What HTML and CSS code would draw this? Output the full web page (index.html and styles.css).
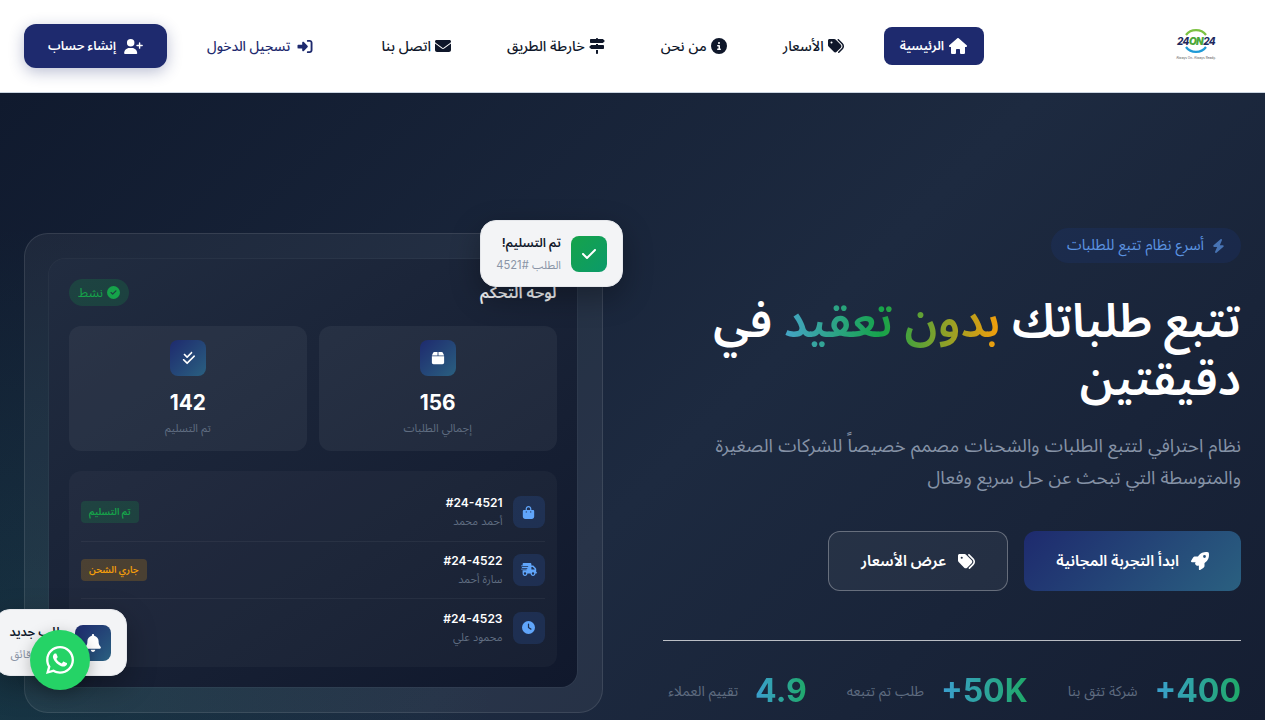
FILE: index.html
```html
<!DOCTYPE html>
<html lang="ar" dir="rtl">
<head>
    <meta charset="UTF-8">
    <meta name="viewport" content="width=device-width, initial-scale=1.0">
    <title>24ON24 - تتبع الطلبات</title>
    <link rel="stylesheet" href="styles.css">
</head>
<body>
    <svg class="sprite" xmlns="http://www.w3.org/2000/svg">
        <symbol id="i-home" viewBox="0 0 576 512"><path d="M575.8 255.5c0 18-15 32.1-32 32.1h-32l.7 160.2c0 2.7-.2 5.4-.5 8.1V472c0 22.1-17.9 40-40 40H456c-1.1 0-2.2 0-3.3-.1c-1.4 .1-2.8 .1-4.2 .1H416 392c-22.1 0-40-17.9-40-40V448 384c0-17.7-14.3-32-32-32H256c-17.7 0-32 14.3-32 32v64 24c0 22.1-17.9 40-40 40H160 128.1c-1.5 0-3-.1-4.5-.2c-1.2 .1-2.4 .2-3.6 .2H104c-22.1 0-40-17.9-40-40V360c0-.9 0-1.9 .1-2.8V287.6H32c-18 0-32-14-32-32.1c0-9 3-17 10-24L266.4 8c7-7 15-8 22-8s15 2 21 7L564.8 231.5c8 7 12 15 11 24z"/></symbol>
        <symbol id="i-tags" viewBox="0 0 512 512"><path d="M345 39.1L472.8 168.4c52.4 53 52.4 138.2 0 191.2L360.8 472.9c-9.3 9.4-24.5 9.5-33.9 .2s-9.5-24.5-.2-33.9L438.6 325.9c33.9-34.3 33.9-89.4 0-123.7L310.9 72.9c-9.3-9.4-9.2-24.6 .2-33.9s24.6-9.2 33.9 .2zM0 229.5V80C0 53.5 21.5 32 48 32H197.5c17 0 33.3 6.7 45.3 18.7l168 168c25 25 25 65.5 0 90.5L277.3 442.7c-25 25-65.5 25-90.5 0l-168-168C6.7 262.7 0 246.5 0 229.5zM144 144a32 32 0 1 0 -64 0 32 32 0 1 0 64 0z"/></symbol>
        <symbol id="i-info" viewBox="0 0 512 512"><path d="M256 512A256 256 0 1 0 256 0a256 256 0 1 0 0 512zM216 336h24V272H216c-13.3 0-24-10.7-24-24s10.7-24 24-24h48c13.3 0 24 10.7 24 24v88h8c13.3 0 24 10.7 24 24s-10.7 24-24 24H216c-13.3 0-24-10.7-24-24s10.7-24 24-24zm40-208a32 32 0 1 1 0 64 32 32 0 1 1 0-64z"/></symbol>
        <symbol id="i-signs" viewBox="0 0 512 512"><path d="M224 32H64C46.3 32 32 46.3 32 64v64c0 17.7 14.3 32 32 32H441.4c4.2 0 8.3-1.7 11.3-4.7l48-48c6.2-6.2 6.2-16.4 0-22.6l-48-48c-3-3-7.1-4.7-11.3-4.7H288c0-17.7-14.3-32-32-32s-32 14.3-32 32zM480 256c0-17.7-14.3-32-32-32H288V192H224v32H70.6c-4.2 0-8.3 1.7-11.3 4.7l-48 48c-6.2 6.2-6.2 16.4 0 22.6l48 48c3 3 7.1 4.7 11.3 4.7H448c17.7 0 32-14.3 32-32V256zM288 480V384H224v96c0 17.7 14.3 32 32 32s32-14.3 32-32z"/></symbol>
        <symbol id="i-envelope" viewBox="0 0 512 512"><path d="M48 64C21.5 64 0 85.5 0 112c0 15.1 7.1 29.3 19.2 38.4L236.8 313.6c11.4 8.5 27 8.5 38.4 0L492.8 150.4c12.1-9.1 19.2-23.3 19.2-38.4c0-26.5-21.5-48-48-48H48zM0 176V384c0 35.3 28.7 64 64 64H448c35.3 0 64-28.7 64-64V176L294.4 339.2c-22.8 17.1-54 17.1-76.8 0L0 176z"/></symbol>
        <symbol id="i-signin" viewBox="0 0 512 512"><path d="M217.9 105.9L340.7 228.7c7.2 7.2 11.3 17.1 11.3 27.3s-4.1 20.1-11.3 27.3L217.9 406.1c-6.4 6.4-15 9.9-24 9.9c-18.7 0-33.9-15.2-33.9-33.9l0-62.1L32 320c-17.7 0-32-14.3-32-32l0-64c0-17.7 14.3-32 32-32l128 0 0-62.1c0-18.7 15.2-33.9 33.9-33.9c9 0 17.6 3.6 24 9.9zM352 416l64 0c17.7 0 32-14.3 32-32l0-256c0-17.7-14.3-32-32-32l-64 0c-17.7 0-32-14.3-32-32s14.3-32 32-32l64 0c53 0 96 43 96 96l0 256c0 53-43 96-96 96l-64 0c-17.7 0-32-14.3-32-32s14.3-32 32-32z"/></symbol>
        <symbol id="i-userplus" viewBox="0 0 640 512"><path d="M96 128a128 128 0 1 1 256 0A128 128 0 1 1 96 128zM0 482.3C0 383.8 79.8 304 178.3 304h91.4C368.2 304 448 383.8 448 482.3c0 16.4-13.3 29.7-29.7 29.7H29.7C13.3 512 0 498.7 0 482.3zM504 312V248H440c-13.3 0-24-10.7-24-24s10.7-24 24-24h64V136c0-13.3 10.7-24 24-24s24 10.7 24 24v64h64c13.3 0 24 10.7 24 24s-10.7 24-24 24H552v64c0 13.3-10.7 24-24 24s-24-10.7-24-24z"/></symbol>
        <symbol id="i-bolt" viewBox="0 0 448 512"><path d="M349.4 44.6c5.9-13.7 1.5-29.7-10.6-38.5s-28.6-8-39.9 1.8l-256 224c-10 8.8-13.6 22.9-8.9 35.3S50.7 288 64 288H175.5L98.6 467.4c-5.9 13.7-1.5 29.7 10.6 38.5s28.6 8 39.9-1.8l256-224c10-8.8 13.6-22.9 8.9-35.3s-16.6-20.7-30-20.7H272.5L349.4 44.6z"/></symbol>
        <symbol id="i-rocket" viewBox="0 0 512 512"><path d="M156.6 384.9L125.7 354c-8.5-8.5-11.5-20.8-7.7-32.2c3-8.9 7-20.5 11.8-33.8L24 288c-8.6 0-16.6-4.6-20.9-12.1s-4.2-16.7 .2-24.1l52.5-88.5c13-21.9 36.5-35.3 62-35.3l82.3 0c2.4-4 4.8-7.7 7.2-11.3C289.1-4.1 411.1-8.1 483.9 5.3c11.6 2.1 20.6 11.2 22.8 22.8c13.4 72.9 9.3 194.8-111.4 276.7c-3.5 2.4-7.3 4.8-11.3 7.2v82.3c0 25.5-13.4 49-35.3 61.9l-88.5 52.5c-7.4 4.4-16.6 4.5-24.1 .2s-12.1-12.2-12.1-20.9V380.8c-14.1 4.9-26.4 8.9-35.7 11.9c-11.2 3.6-23.4 .5-31.8-7.8zM384 168a40 40 0 1 0 0-80 40 40 0 1 0 0 80z"/></symbol>
        <symbol id="i-box" viewBox="0 0 448 512"><path d="M50.7 58.5L0 160H208V32H93.7C75.5 32 58.9 42.3 50.7 58.5zM240 160H448L397.3 58.5C389.1 42.3 372.5 32 354.3 32H240V160zm208 32H0V416c0 35.3 28.7 64 64 64H384c35.3 0 64-28.7 64-64V192z"/></symbol>
        <symbol id="i-checkdouble" viewBox="0 0 448 512"><path d="M374.6 86.6c12.5-12.5 12.5-32.8 0-45.3s-32.8-12.5-45.3 0L192 178.7 118.6 105.4c-12.5-12.5-32.8-12.5-45.3 0s-12.5 32.8 0 45.3l96 96c12.5 12.5 32.8 12.5 45.3 0l160-160zm96 128c12.5-12.5 12.5-32.8 0-45.3s-32.8-12.5-45.3 0L192 402.7 86.6 297.4c-12.5-12.5-32.8-12.5-45.3 0s-12.5 32.8 0 45.3l128 128c12.5 12.5 32.8 12.5 45.3 0l256-256z"/></symbol>
        <symbol id="i-checkcircle" viewBox="0 0 512 512"><path d="M256 512A256 256 0 1 0 256 0a256 256 0 1 0 0 512zM369 209L241 337c-9.4 9.4-24.6 9.4-33.9 0l-64-64c-9.4-9.4-9.4-24.6 0-33.9s24.6-9.4 33.9 0l47 47L335 175c9.4-9.4 24.6-9.4 33.9 0s9.4 24.6 0 33.9z"/></symbol>
        <symbol id="i-check" viewBox="0 0 448 512"><path d="M438.6 105.4c12.5 12.5 12.5 32.8 0 45.3l-256 256c-12.5 12.5-32.8 12.5-45.3 0l-128-128c-12.5-12.5-12.5-32.8 0-45.3s32.8-12.5 45.3 0L160 338.7 393.4 105.4c12.5-12.5 32.8-12.5 45.3 0z"/></symbol>
        <symbol id="i-bag" viewBox="0 0 448 512"><path d="M160 112c0-35.3 28.7-64 64-64s64 28.7 64 64v48H160V112zm-48 48H48c-26.5 0-48 21.5-48 48V416c0 53 43 96 96 96H352c53 0 96-43 96-96V208c0-26.5-21.5-48-48-48H336V112C336 50.1 285.9 0 224 0S112 50.1 112 112v48zm24 48a24 24 0 1 1 0 48 24 24 0 1 1 0-48zm152 24a24 24 0 1 1 48 0 24 24 0 1 1 -48 0z"/></symbol>
        <symbol id="i-truck" viewBox="0 0 640 512"><path d="M112 0C85.5 0 64 21.5 64 48V96H16c-8.8 0-16 7.2-16 16s7.2 16 16 16H64 272c8.8 0 16 7.2 16 16s-7.2 16-16 16H64 48c-8.8 0-16 7.2-16 16s7.2 16 16 16H64 240c8.8 0 16 7.2 16 16s-7.2 16-16 16H64 16c-8.8 0-16 7.2-16 16s7.2 16 16 16H64 208c8.8 0 16 7.2 16 16s-7.2 16-16 16H64V416c0 53 43 96 96 96s96-43 96-96H384c0 53 43 96 96 96s96-43 96-96h32c17.7 0 32-14.3 32-32s-14.3-32-32-32V288 256 237.3c0-17-6.7-33.3-18.7-45.3L512 114.7c-12-12-28.3-18.7-45.3-18.7H416V48c0-26.5-21.5-48-48-48H112zM544 237.3V256H416V160h50.7L544 237.3zM160 368a48 48 0 1 1 0 96 48 48 0 1 1 0-96zm272 48a48 48 0 1 1 96 0 48 48 0 1 1 -96 0z"/></symbol>
        <symbol id="i-clock" viewBox="0 0 512 512"><path d="M256 0a256 256 0 1 1 0 512A256 256 0 1 1 256 0zM232 120V256c0 8 4 15.5 10.7 20l96 64c11 7.4 25.9 4.4 33.3-6.7s4.4-25.9-6.7-33.3L280 243.2V120c0-13.3-10.7-24-24-24s-24 10.7-24 24z"/></symbol>
        <symbol id="i-bell" viewBox="0 0 448 512"><path d="M224 0c-17.7 0-32 14.3-32 32V51.2C119 66 64 130.6 64 208v18.8c0 47-17.3 92.4-48.5 127.6l-7.4 8.3c-8.4 9.4-10.4 22.9-5.3 34.4S19.4 416 32 416H416c12.6 0 24-7.4 29.2-18.9s3.1-25-5.3-34.4l-7.4-8.3C401.3 319.2 384 273.9 384 226.8V208c0-77.4-55-142-128-156.8V32c0-17.7-14.3-32-32-32zm45.3 493.3c12-12 18.7-28.3 18.7-45.3H224 160c0 17 6.7 33.3 18.7 45.3s28.3 18.7 45.3 18.7s33.3-6.7 45.3-18.7z"/></symbol>
        <symbol id="i-whatsapp" viewBox="0 0 448 512"><path d="M380.9 97.1C339 55.1 283.2 32 223.9 32c-122.4 0-222 99.6-222 222 0 39.1 10.2 77.3 29.6 111L0 480l117.7-30.9c32.4 17.7 68.9 27 106.1 27h.1c122.3 0 224.1-99.6 224.1-222 0-59.3-25.2-115-67.1-157zm-157 341.6c-33.2 0-65.7-8.9-94-25.7l-6.7-4-69.8 18.3L72 359.2l-4.4-7c-18.5-29.4-28.2-63.3-28.2-98.2 0-101.7 82.8-184.5 184.6-184.5 49.3 0 95.6 19.2 130.4 54.1 34.8 34.9 56.2 81.2 56.1 130.5 0 101.8-84.9 184.6-186.6 184.6zm101.2-138.2c-5.5-2.8-32.8-16.2-37.9-18-5.1-1.9-8.8-2.8-12.5 2.8-3.7 5.6-14.3 18-17.6 21.8-3.2 3.7-6.5 4.2-12 1.4-32.6-16.3-54-29.1-75.5-66-5.7-9.8 5.7-9.1 16.3-30.3 1.8-3.7.9-6.9-.5-9.7-1.4-2.8-12.5-30.1-17.1-41.2-4.5-10.8-9.1-9.3-12.5-9.5-3.2-.2-6.9-.2-10.6-.2-3.7 0-9.7 1.4-14.8 6.9-5.1 5.6-19.4 19-19.4 46.3 0 27.3 19.9 53.7 22.6 57.4 2.8 3.7 39.1 59.7 94.8 83.8 35.2 15.2 49 16.5 66.6 13.9 10.7-1.6 32.8-13.4 37.4-26.4 4.6-13 4.6-24.1 3.2-26.4-1.3-2.5-5-3.9-10.5-6.6z"/></symbol>
    </svg>

    <header class="navbar">
        <a href="#" class="logo">
            <span class="logo-mark">
                <svg class="logo-ring" viewBox="0 0 40 26">
                    <path d="M10 7 A12 11 0 0 1 30 7" fill="none" stroke="#7cc242" stroke-width="2.2"/>
                    <path d="M10 19 A12 11 0 0 0 30 19" fill="none" stroke="#1f9ad6" stroke-width="2.2"/>
                </svg>
                <span class="logo-text" dir="ltr">24<b>ON</b>24</span>
            </span>
            <span class="logo-tag" dir="ltr">Always On. Always Ready.</span>
        </a>
        <nav class="nav-links">
            <a href="#" class="nav-link active"><svg class="ico ico-home"><use href="#i-home"/></svg>الرئيسية</a>
            <a href="#" class="nav-link"><svg class="ico"><use href="#i-tags"/></svg>الأسعار</a>
            <a href="#" class="nav-link"><svg class="ico"><use href="#i-info"/></svg>من نحن</a>
            <a href="#" class="nav-link"><svg class="ico"><use href="#i-signs"/></svg>خارطة الطريق</a>
            <a href="#" class="nav-link"><svg class="ico"><use href="#i-envelope"/></svg>اتصل بنا</a>
        </nav>
        <div class="auth">
            <a href="#" class="login"><svg class="ico"><use href="#i-signin"/></svg>تسجيل الدخول</a>
            <a href="#" class="signup"><svg class="ico ico-user"><use href="#i-userplus"/></svg>إنشاء حساب</a>
        </div>
    </header>

    <main class="hero">
        <section class="hero-content">
            <div class="badge"><svg class="ico-bolt"><use href="#i-bolt"/></svg>أسرع نظام تتبع للطلبات</div>
            <h1>تتبع طلباتك <span class="highlight">بدون تعقيد</span> في دقيقتين</h1>
            <p class="lead">نظام احترافي لتتبع الطلبات والشحنات مصمم خصيصاً للشركات الصغيرة والمتوسطة التي تبحث عن حل سريع وفعال</p>
            <div class="hero-btns">
                <a href="#" class="btn btn-primary"><svg class="ico"><use href="#i-rocket"/></svg>ابدأ التجربة المجانية</a>
                <a href="#" class="btn btn-outline"><svg class="ico ico-tags"><use href="#i-tags"/></svg>عرض الأسعار</a>
            </div>
            <div class="hero-stats">
                <div class="stat"><span class="stat-num" dir="ltr">+400</span><span class="stat-label">شركة تثق بنا</span></div>
                <div class="stat"><span class="stat-num" dir="ltr">+50K</span><span class="stat-label">طلب تم تتبعه</span></div>
                <div class="stat"><span class="stat-num" dir="ltr">4.9</span><span class="stat-label">تقييم العملاء</span></div>
            </div>
        </section>

        <section class="preview">
            <div class="float-card float-top">
                <span class="float-icon float-green"><svg class="ico-check"><use href="#i-check"/></svg></span>
                <div>
                    <div class="float-title">تم التسليم!</div>
                    <div class="float-sub">الطلب #4521</div>
                </div>
            </div>
            <div class="dashboard">
                <div class="dash-head">
                    <h3>لوحة التحكم</h3>
                    <span class="pill"><svg class="ico-pill"><use href="#i-checkcircle"/></svg>نشط</span>
                </div>
                <div class="dash-stats">
                    <div class="dash-card">
                        <span class="dash-icon"><svg class="ico-box"><use href="#i-box"/></svg></span>
                        <div class="dash-num">156</div>
                        <div class="dash-label">إجمالي الطلبات</div>
                    </div>
                    <div class="dash-card">
                        <span class="dash-icon"><svg class="ico-box"><use href="#i-checkdouble"/></svg></span>
                        <div class="dash-num">142</div>
                        <div class="dash-label">تم التسليم</div>
                    </div>
                </div>
                <div class="orders">
                    <div class="order">
                        <span class="order-icon"><svg class="ico-order"><use href="#i-bag"/></svg></span>
                        <div class="order-info">
                            <div class="order-id">#24-4521</div>
                            <div class="order-name">أحمد محمد</div>
                        </div>
                        <span class="status status-done">تم التسليم</span>
                    </div>
                    <div class="order">
                        <span class="order-icon"><svg class="ico-order ico-truck"><use href="#i-truck"/></svg></span>
                        <div class="order-info">
                            <div class="order-id">#24-4522</div>
                            <div class="order-name">سارة أحمد</div>
                        </div>
                        <span class="status status-ship">جاري الشحن</span>
                    </div>
                    <div class="order">
                        <span class="order-icon"><svg class="ico-order"><use href="#i-clock"/></svg></span>
                        <div class="order-info">
                            <div class="order-id">#24-4523</div>
                            <div class="order-name">محمود علي</div>
                        </div>
                    </div>
                </div>
            </div>
            <div class="float-card float-bottom">
                <span class="float-icon float-blue"><svg class="ico-bell"><use href="#i-bell"/></svg></span>
                <div>
                    <div class="float-title">طلب جديد</div>
                    <div class="float-sub">منذ 5 دقائق</div>
                </div>
            </div>
        </section>
    </main>

    <a href="#" class="whatsapp"><svg class="ico-wa"><use href="#i-whatsapp"/></svg></a>
</body>
</html>
```

FILE: styles.css
```css
* {
    margin: 0;
    padding: 0;
    box-sizing: border-box;
}

html, body {
    height: 720px;
    overflow: hidden;
}

body {
    font-family: Inter, "Noto Sans Arabic", sans-serif;
    background: #fff;
    color: #0f172a;
    display: flex;
    flex-direction: column;
}

a {
    text-decoration: none;
    color: inherit;
}

svg {
    fill: currentColor;
    display: block;
    flex-shrink: 0;
}

.sprite {
    display: none;
}

/* Navbar */
.navbar {
    height: 93px;
    flex-shrink: 0;
    display: flex;
    align-items: center;
    padding: 0 24px;
    background: #fff;
    border-bottom: 1px solid #cbd5e1;
}

.logo {
    width: 90px;
    display: flex;
    flex-direction: column;
    align-items: center;
    margin-top: -4px;
}

.logo-mark {
    position: relative;
    width: 40px;
    height: 26px;
    display: flex;
    align-items: center;
    justify-content: center;
}

.logo-ring {
    position: absolute;
    inset: 0;
    width: 40px;
    height: 26px;
}

.logo-text {
    position: relative;
    font-size: 10px;
    font-weight: 800;
    font-style: italic;
    letter-spacing: -0.6px;
    color: #1e2a5e;
}

.logo-text b {
    color: #4da83a;
}

.logo-tag {
    font-size: 3.2px;
    color: #555;
    margin-top: 2px;
    white-space: nowrap;
}

.nav-links {
    display: flex;
    gap: 24px;
    margin-right: 167px;
}

.nav-link {
    display: flex;
    align-items: center;
    gap: 4px;
    height: 38px;
    padding: 0 16px;
    border-radius: 8px;
    font-size: 14.2px;
    font-weight: 500;
    color: #0f172a;
    white-space: nowrap;
}

.nav-link .ico {
    width: 16px;
    height: 16px;
}

.nav-link.active {
    background: #1e2a6e;
    color: #fff;
    font-size: 12.6px;
    font-weight: 600;
}

.nav-link .ico-home {
    width: 20px;
}

.auth {
    display: flex;
    align-items: center;
    gap: 24px;
    margin-right: auto;
}

.login {
    display: flex;
    align-items: center;
    gap: 7px;
    padding: 0 16px;
    font-size: 13.6px;
    font-weight: 500;
    color: #1e2a6e;
    white-space: nowrap;
}

.login .ico {
    width: 16px;
    height: 15px;
}

.signup {
    display: flex;
    align-items: center;
    gap: 8px;
    height: 44px;
    padding: 0 24px;
    border-radius: 12px;
    background: #1e2a6e;
    color: #fff;
    font-size: 12.6px;
    font-weight: 600;
    box-shadow: 0 4px 15px rgba(30, 42, 110, 0.3);
    white-space: nowrap;
}

.signup .ico {
    width: 19px;
    height: 15px;
}

/* Hero */
.hero {
    flex: 1;
    display: grid;
    grid-template-columns: minmax(0, 1fr) minmax(0, 1fr);
    gap: 60px;
    align-items: start;
    padding: 135px 24px 0;
    overflow: hidden;
    background:
        radial-gradient(circle at 0% 100%, rgba(20, 120, 110, 0.2), transparent 35%),
        linear-gradient(135deg, #101a2e 0%, #1d2a40 55%, #151e32 100%);
    color: #fff;
}

.badge {
    display: inline-flex;
    align-items: center;
    gap: 8px;
    height: 35px;
    padding: 0 16px;
    border-radius: 50px;
    background: rgba(30, 58, 138, 0.2);
    color: #5b93e0;
    font-size: 14.8px;
}

.ico-bolt {
    width: 13px;
    height: 14px;
    opacity: 0.7;
}

h1 {
    font-size: 46.6px;
    font-weight: 600;
    line-height: 58px;
    margin-top: 28px;
    color: #fff;
}

.highlight {
    background: linear-gradient(to left, #f59e0b 0%, #16a34a 55%, #45a5c8 100%);
    -webkit-background-clip: text;
    background-clip: text;
    color: transparent;
}

.lead {
    font-size: 18.5px;
    line-height: 32px;
    color: #8592a6;
    margin-top: 22px;
}

.hero-btns {
    display: flex;
    gap: 16px;
    margin-top: 38px;
}

.btn {
    display: flex;
    align-items: center;
    gap: 12px;
    height: 60px;
    padding: 0 32px;
    border-radius: 12px;
    font-size: 15.3px;
    font-weight: 600;
    color: #fff;
    white-space: nowrap;
}

.btn .ico {
    width: 18px;
    height: 18px;
}

.btn .ico-tags {
    width: 17px;
    height: 17px;
}

.btn-primary {
    background: linear-gradient(135deg, #1e2a6e, #2a6080);
}

.btn-outline {
    background: rgba(255, 255, 255, 0.05);
    border: 1px solid rgba(255, 255, 255, 0.3);
}

.hero-stats {
    display: flex;
    gap: 40px;
    margin-top: 49px;
    padding-top: 34px;
    border-top: 1px solid rgba(255, 255, 255, 0.7);
}

.stat {
    display: flex;
    align-items: center;
    gap: 17px;
}

.stat-num {
    font-size: 32px;
    font-weight: 700;
    line-height: 1;
    background: linear-gradient(to right, #3b9fd0, #1fa968);
    -webkit-background-clip: text;
    background-clip: text;
    color: transparent;
}

.stat-label {
    font-size: 14px;
    color: #5f6c80;
    white-space: nowrap;
}

/* Preview card */
.preview {
    position: relative;
    margin-top: 5px;
    height: 480px;
    padding: 25px 25px 25px 24px;
    border-radius: 24px;
    border: 1px solid rgba(255, 255, 255, 0.1);
    background: rgba(255, 255, 255, 0.05);
}

.dashboard {
    height: 428px;
    padding: 20px;
    border-radius: 16px;
    background: linear-gradient(145deg, #212c40, #10182c);
    box-shadow: 0 0 0 1px rgba(255, 255, 255, 0.04);
}

.dash-head {
    display: flex;
    align-items: center;
    justify-content: space-between;
    height: 27px;
}

.dash-head h3 {
    font-size: 15.6px;
    font-weight: 600;
    line-height: 26px;
    color: #f1f3f6;
}

.pill {
    display: flex;
    align-items: center;
    gap: 4px;
    height: 27px;
    padding: 0 9px;
    border-radius: 20px;
    background: rgba(22, 163, 74, 0.2);
    color: #16a34a;
    font-size: 12.8px;
}

.ico-pill {
    width: 13px;
    height: 13px;
}

.dash-stats {
    display: grid;
    grid-template-columns: minmax(0, 1fr) minmax(0, 1fr);
    gap: 12px;
    margin-top: 20px;
}

.dash-card {
    height: 125px;
    display: flex;
    flex-direction: column;
    align-items: center;
    padding-top: 14px;
    border-radius: 12px;
    background: rgba(255, 255, 255, 0.05);
}

.dash-icon {
    width: 36px;
    height: 36px;
    display: flex;
    align-items: center;
    justify-content: center;
    border-radius: 8px;
    background: linear-gradient(135deg, #1e2a6e, #2a6080);
}

.ico-box {
    width: 14px;
    height: 14px;
}

.dash-num {
    font-size: 20.8px;
    font-weight: 700;
    line-height: 26px;
    margin-top: 14px;
}

.dash-label {
    font-size: 11.2px;
    line-height: 16px;
    color: #5f6c80;
    margin-top: 4px;
}

.orders {
    margin-top: 20px;
    height: 196px;
    padding: 13px 12px 12px;
    border-radius: 12px;
    background: rgba(255, 255, 255, 0.03);
}

.order {
    height: 57.5px;
    display: flex;
    align-items: center;
    gap: 10px;
    border-bottom: 1px solid rgba(255, 255, 255, 0.05);
}

.order:last-child {
    border-bottom: none;
}

.order-icon {
    width: 32px;
    height: 32px;
    display: flex;
    align-items: center;
    justify-content: center;
    border-radius: 8px;
    background: rgba(59, 130, 246, 0.15);
    color: #60a5fa;
}

.ico-order {
    width: 13px;
    height: 13px;
}

.ico-truck {
    width: 16px;
}

.order-info {
    flex: 1;
}

.order-id {
    font-size: 12px;
    font-weight: 600;
    line-height: 16px;
    text-align: right;
}

.order-name {
    font-size: 11px;
    line-height: 16px;
    color: #5f6c80;
    margin-top: 2px;
}

.status {
    height: 22px;
    padding: 0 8px;
    display: flex;
    align-items: center;
    border-radius: 4px;
    font-size: 9.4px;
    font-weight: 600;
}

.status-done {
    background: rgba(22, 163, 74, 0.2);
    color: #16a34a;
}

.status-ship {
    background: rgba(245, 158, 11, 0.2);
    color: #f59e0b;
}

/* Floating cards */
.float-card {
    position: absolute;
    display: flex;
    align-items: center;
    gap: 10px;
    height: 67px;
    padding: 0 15px;
    border-radius: 16px;
    background: #f3f4f6;
    border: 1px solid #e5e7eb;
    color: #0f172a;
    box-shadow: 0 10px 30px rgba(0, 0, 0, 0.3);
    white-space: nowrap;
}

.float-top {
    top: -14px;
    left: 455px;
    width: 143px;
}

.float-bottom {
    top: 375px;
    left: -31px;
    width: 133px;
}

.float-icon {
    width: 36px;
    height: 36px;
    display: flex;
    align-items: center;
    justify-content: center;
    border-radius: 8px;
    color: #fff;
    flex-shrink: 0;
}

.float-green {
    background: linear-gradient(135deg, #16a34a, #0b9a6a);
}

.float-blue {
    background: linear-gradient(135deg, #1e2a6e, #2a6080);
}

.ico-check {
    width: 16px;
    height: 16px;
}

.ico-bell {
    width: 16px;
    height: 18px;
}

.float-title {
    font-size: 12.4px;
    font-weight: 600;
    line-height: 18px;
}

.float-sub {
    font-size: 11.2px;
    line-height: 18px;
    color: #8a94a6;
    margin-top: 4px;
}

.whatsapp {
    position: fixed;
    left: 30px;
    top: 630px;
    width: 60px;
    height: 60px;
    border-radius: 50%;
    background: #25d366;
    color: #fff;
    display: flex;
    align-items: center;
    justify-content: center;
    box-shadow: 0 4px 15px rgba(0, 0, 0, 0.25);
}

.ico-wa {
    width: 28px;
    height: 32px;
}
```
